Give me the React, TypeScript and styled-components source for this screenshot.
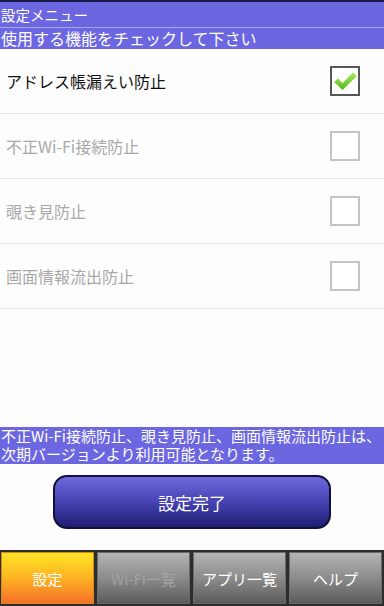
import styled, { createGlobalStyle } from 'styled-components'

const GlobalStyle = createGlobalStyle`
html, body {
  margin: 0;
  padding: 0;
  background: #fdfdfd;
}
body {
  font-family: "Noto Sans CJK JP", "Noto Sans", sans-serif;
}
`

const Screen = styled.div`
width: 384px;
height: 606px;
display: flex;
flex-direction: column;
background: #fdfdfd;
overflow: hidden;
`

const TitleBar = styled.div`
height: 25px;
border-top: 2px solid #1c1a4a;
border-bottom: 1px solid #a9a6f0;
background: #6c67e0;
color: #fff;
font-size: 14.5px;
line-height: 25px;
padding-left: 1px;
`

const SubBar = styled.div`
height: 21px;
background: #6c67e0;
color: #fff;
font-size: 16px;
line-height: 21px;
padding-left: 1px;
`

const List = styled.div`
display: flex;
flex-direction: column;
`

const Row = styled.div<{ $enabled?: boolean }>`
height: 64px;
border-bottom: 1px solid #e6e6e6;
display: flex;
align-items: center;
justify-content: space-between;
padding: 0 24px 0 6px;
color: ${p => (p.$enabled ? '#111' : '#a8a8a8')};
font-size: 16px;
`

const Box = styled.div<{ $checked?: boolean }>`
width: 26px;
height: 26px;
border: 2px solid ${p => (p.$checked ? '#575757' : '#c4c4c4')};
background: #fff;
display: flex;
align-items: center;
justify-content: center;
`

const Spacer = styled.div`
flex: 1;
`

const Notice = styled.div`
background: #6c67e0;
color: #fff;
font-size: 15px;
padding: 0 0 1px 1px;
`

const NoticeLine = styled.div`
height: 18px;
line-height: 18px;
white-space: nowrap;
`

const ButtonArea = styled.div`
height: 86px;
display: flex;
justify-content: center;
padding-top: 11px;
box-sizing: border-box;
`

const DoneButton = styled.div`
width: 274px;
height: 50px;
border: 2px solid #10103a;
border-radius: 14px;
background: linear-gradient(#6e6ade 0%, #4a46b8 45%, #1f1d70 100%);
color: #fff;
font-size: 17px;
display: flex;
align-items: center;
justify-content: center;
`

const TabBar = styled.div`
height: 56px;
background: #2d2d2d;
display: grid;
grid-template-columns: repeat(4, 1fr);
gap: 3px;
padding: 2px 2px 2px 1px;
box-sizing: border-box;
`

const Tab = styled.div<{ $active?: boolean; $disabled?: boolean }>`
display: flex;
align-items: center;
justify-content: center;
font-size: 15px;
color: ${p => (p.$disabled ? '#a2a2a2' : '#fff')};
background: ${p =>
  p.$active
    ? 'linear-gradient(#ffe426 0%, #fcb322 50%, #f7702a 100%)'
    : 'linear-gradient(#b4b4b4 0%, #8c8c8c 50%, #5c5c5c 100%)'};
border: 1px solid ${p => (p.$active ? '#d88a1a' : '#6a6a6a')};
`

const Check = () => (
  <svg width="26" height="22" viewBox="0 0 26 22">
    <defs>
      <linearGradient id="g" x1="0" y1="0" x2="0" y2="1">
        <stop offset="0" stopColor="#a8e85a" />
        <stop offset="1" stopColor="#58b81c" />
      </linearGradient>
    </defs>
    <path d="M2 12 L6 8.5 L10.5 13 L21 2.5 L25 6 L10.5 20 Z" fill="url(#g)" />
  </svg>
)

const items = [
  { label: 'アドレス帳漏えい防止', on: true },
  { label: '不正Wi-Fi接続防止', on: false },
  { label: '覗き見防止', on: false },
  { label: '画面情報流出防止', on: false },
]

const App = () => {
  return (
    <Screen>
      <GlobalStyle />
      <TitleBar>設定メニュー</TitleBar>
      <SubBar>使用する機能をチェックして下さい</SubBar>
      <List>
        {items.map(it => (
          <Row key={it.label} $enabled={it.on}>
            <span>{it.label}</span>
            <Box $checked={it.on}>{it.on && <Check />}</Box>
          </Row>
        ))}
      </List>
      <Spacer />
      <Notice>
        <NoticeLine>不正Wi-Fi接続防止、覗き見防止、画面情報流出防止は、</NoticeLine>
        <NoticeLine>次期バージョンより利用可能となります。</NoticeLine>
      </Notice>
      <ButtonArea>
        <DoneButton>設定完了</DoneButton>
      </ButtonArea>
      <TabBar>
        <Tab $active>設定</Tab>
        <Tab $disabled>Wi-Fi一覧</Tab>
        <Tab>アプリ一覧</Tab>
        <Tab>ヘルプ</Tab>
      </TabBar>
    </Screen>
  )
}

export default App
